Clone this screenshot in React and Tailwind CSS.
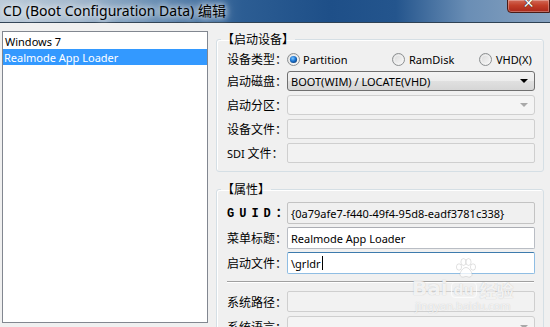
import React from "react";

const cjk = "font-['Noto_Sans_CJK_SC',sans-serif]";

function Radio({ checked, id }) {
  return (
    <svg width="13" height="13" viewBox="0 0 13 13" className="shrink-0">
      <defs>
        <linearGradient id={`rb-${id}`} x1="0" y1="0" x2="1" y2="1">
          <stop offset="0" stopColor="#d6d6d6" />
          <stop offset="1" stopColor="#fbfbfb" />
        </linearGradient>
        <radialGradient id={`rd-${id}`} cx="0.4" cy="0.35" r="0.7">
          <stop offset="0" stopColor="#7cc6ff" />
          <stop offset="0.55" stopColor="#1a73d1" />
          <stop offset="1" stopColor="#0e3f7a" />
        </radialGradient>
      </defs>
      <circle cx="6.5" cy="6.5" r="6" fill={`url(#rb-${id})`} stroke="#8c8f91" />
      <circle cx="6.5" cy="6.5" r="4.3" fill="none" stroke="#f4f4f4" strokeWidth="0.8" />
      {checked && <circle cx="6.5" cy="6.5" r="3.6" fill={`url(#rd-${id})`} />}
    </svg>
  );
}

function Arrow({ color = "#000" }) {
  return (
    <svg width="8" height="4" viewBox="0 0 8 4" className="shrink-0">
      <path d="M0 0h8L4 4z" fill={color} />
    </svg>
  );
}

function Paw() {
  return (
    <svg width="22" height="20" viewBox="0 0 22 20" fill="rgba(255,255,255,0.75)" stroke="rgba(150,150,150,0.35)" strokeWidth="0.8">
      <ellipse cx="4" cy="9" rx="2.6" ry="3.2" />
      <ellipse cx="8.5" cy="4" rx="2.6" ry="3.4" />
      <ellipse cx="13.5" cy="4" rx="2.6" ry="3.4" />
      <ellipse cx="18" cy="9" rx="2.6" ry="3.2" />
      <path d="M11 9.5c3 0 6 4.5 6 7 0 2-2 2.8-3.5 2.5-1-.2-1.7-.6-2.5-.6s-1.5.4-2.5.6C7 19.3 5 18.5 5 16.5c0-2.5 3-7 6-7z" />
    </svg>
  );
}

function Label({ children }) {
  return <div className={`w-[60px] shrink-0 text-[12px] leading-none text-black ${cjk}`}>{children}</div>;
}

function Row({ label, children, className = "" }) {
  return (
    <div className={`flex items-center ${className}`}>
      {label}
      <div className="flex-1 min-w-0">{children}</div>
    </div>
  );
}

function Group({ title, children, className = "" }) {
  return (
    <fieldset className={`border border-[#d5dfe5] rounded-[3px] px-[4px] shadow-[inset_1px_1px_0_#ffffff] ${className}`}>
      <legend className={`px-[1px] text-[12px] leading-[16px] text-black ${cjk}`}>{title}</legend>
      <div className="pl-[6px] pr-[4px]">{children}</div>
    </fieldset>
  );
}

const textFont = "font-['Noto_Sans',sans-serif] text-[11px] leading-none";

export default function App() {
  return (
    <div className="relative w-[550px] h-[327px] overflow-hidden bg-[#f0f0f0] flex flex-col">
      {/* title bar */}
      <div className="h-[23px] shrink-0 flex items-start border-b border-[#2f4254] bg-[linear-gradient(90deg,#bccbd9_0%,#a3b8cd_14%,#6a8fb4_28%,#2c5d93_44%,#1e4f88_60%,#24558d_72%,#6a8eb5_85%,#87a2c0_100%)]">
        <div className="pl-[3px] pt-[1px] text-[14px] leading-[20px] text-black font-['Noto_Sans','Noto_Sans_CJK_SC',sans-serif] [text-shadow:0_0_6px_#ffffff,0_0_10px_#ffffff]">
          CD (Boot Configuration Data) 编辑
        </div>
        <div className="ml-auto w-[43px] h-[14px] -mt-[1px] rounded-bl-[4px] border border-[#4a1c17] bg-[linear-gradient(#d26a58_0%,#c23f29_45%,#a8271a_100%)] shadow-[inset_0_0_0_1px_rgba(255,255,255,0.3)] flex justify-center items-start overflow-hidden">
          <span className="-mt-[3px] text-white font-bold text-[14px] leading-[12px] font-['DejaVu_Sans',sans-serif] [text-shadow:0_0_1px_#222,0_0_1px_#222]">✕</span>
        </div>
      </div>

      <div className="flex flex-1 min-h-0 pt-[8px]">
        {/* list */}
        <div className={`ml-[2px] w-[206px] h-[292px] shrink-0 bg-white border border-[#828790] pt-[1px] ${textFont}`}>
          <div className="h-[16px] pl-[2px] flex items-center text-black">Windows 7</div>
          <div className="h-[16px] pl-[1px] flex items-center text-white bg-[#3399ff]">Realmode App Loader</div>
        </div>

        {/* right column */}
        <div className="ml-[8px] w-[328px] shrink-0 flex flex-col">
          <Group title="【启动设备】" className="pb-[8px]">
            <Row label={<Label>设备类型：</Label>} className="h-[20px] mt-[2px]">
              <div className={`grid grid-cols-[105px_87px_1fr] items-center ${textFont}`}>
                <div className="flex items-center gap-[3px]"><Radio checked id="a" />Partition</div>
                <div className="flex items-center gap-[4px]"><Radio id="b" />RamDisk</div>
                <div className="flex items-center gap-[4px]"><Radio id="c" />VHD(X)</div>
              </div>
            </Row>
            <div className="flex flex-col gap-[4px] mt-[2px]">
              <Row label={<Label>启动磁盘：</Label>}>
                <div className={`h-[20px] rounded-[3px] border border-[#707070] bg-[linear-gradient(#f3f3f3_0%,#ececec_50%,#e0e0e0_51%,#d6d6d6_100%)] flex items-center pl-[3px] pr-[6px] text-black ${textFont}`}>
                  <span className="flex-1">BOOT(WIM) / LOCATE(VHD)</span>
                  <Arrow />
                </div>
              </Row>
              <Row label={<Label>启动分区：</Label>}>
                <div className="h-[20px] rounded-[3px] border border-[#cfcfcf] bg-[#f4f4f4] flex items-center justify-end pr-[6px]">
                  <Arrow color="#a8a8a8" />
                </div>
              </Row>
              <Row label={<Label>设备文件：</Label>}>
                <div className="h-[20px] rounded-[2px] border border-[#cfcfcf] bg-[#f2f2f2]" />
              </Row>
              <Row label={<Label><span className="font-['Noto_Sans',sans-serif] text-[11px]">SDI</span> 文件：</Label>}>
                <div className="h-[20px] rounded-[2px] border border-[#cfcfcf] bg-[#f2f2f2]" />
              </Row>
            </div>
          </Group>

          <Group title="【属性】" className="mt-[9px] pb-[8px]">
            <div className="flex flex-col gap-[3px] pt-[5px]">
              <Row label={<div className="w-[60px] shrink-0 font-['Liberation_Mono',monospace] font-bold text-[12px] tracking-[5px] leading-none">GUID<span className={`${cjk} tracking-normal`}>：</span></div>}>
                <div className={`h-[22px] rounded-[2px] border border-[#c3c3c3] bg-[#f0f0f0] flex items-center pl-[3px] text-black ${textFont}`}>
                  {"{0a79afe7-f440-49f4-95d8-eadf3781c338}"}
                </div>
              </Row>
              <Row label={<Label>菜单标题：</Label>}>
                <div className={`h-[22px] rounded-[2px] border border-[#b9bdc4] border-t-[#abadb3] bg-white flex items-center pl-[3px] text-black ${textFont}`}>
                  Realmode App Loader
                </div>
              </Row>
              <Row label={<Label>启动文件：</Label>}>
                <div className={`h-[22px] rounded-[2px] border border-[#8fbde3] border-t-[#3d7bad] bg-white flex items-center pl-[3px] text-black ${textFont}`}>
                  \grldr<span className="ml-[1px] w-[1px] h-[14px] bg-black" />
                </div>
              </Row>
            </div>
            <div className="mt-[7px] mr-[1px] h-[2px] border-t border-[#a0a0a0] border-b border-b-white" />
            <div className="flex flex-col gap-[4px] mt-[8px]">
              <Row label={<Label>系统路径：</Label>}>
                <div className="h-[21px] rounded-[2px] border border-[#cfcfcf] bg-[#f2f2f2]" />
              </Row>
              <Row label={<Label>系统语言：</Label>}>
                <div className="h-[21px] rounded-[3px] border border-[#cfcfcf] bg-[#f4f4f4] flex items-center justify-end pr-[6px]">
                  <Arrow color="#a8a8a8" />
                </div>
              </Row>
            </div>
          </Group>
        </div>
      </div>

      {/* watermark */}
      <div className="absolute left-[412px] top-[258px] flex flex-col items-center pointer-events-none text-white/80 [text-shadow:0_0_1px_rgba(120,120,120,0.45)]">
        <div className="ml-[6px]"><Paw /></div>
        <div className="flex items-end gap-[3px] leading-none">
          <span className="text-[20px] font-bold font-['DejaVu_Sans',sans-serif]">Bai</span>
          <span className="px-[2px] rounded-[4px] border border-white/70 text-[14px] font-bold font-['DejaVu_Sans',sans-serif]">du</span>
          <span className={`text-[17px] font-bold ${cjk}`}>经验</span>
        </div>
        <div className="mt-[2px] text-[11px] leading-none font-['Noto_Sans',sans-serif]">jingyan.baidu.com</div>
      </div>
    </div>
  );
}
